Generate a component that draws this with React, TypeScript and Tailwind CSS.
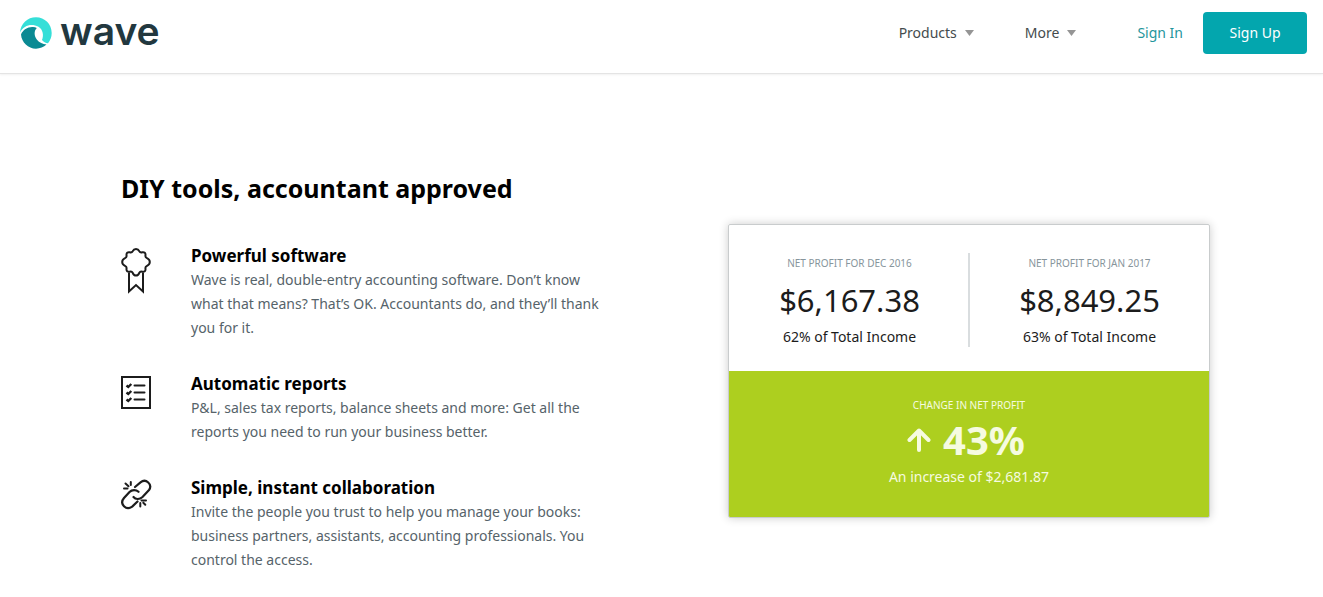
import type { ReactNode } from "react";

function WaveMark() {
  return (
    <svg viewBox="0 0 32 32" className="h-8 w-8" aria-hidden="true">
      <path
        d="M0 15.500C0.800 6.500 7.500 0.300 16 0.300C24.800 0.300 31.700 7.200 31.700 16C31.700 20 30.300 23.600 28 26.200C25.500 26 23.500 25 22 23C24 18.500 23 12.500 18.500 9.800C11.500 6 3.500 8.500 0 15.500Z"
        fill="#35dfd8"
      />
      <path
        d="M1 17.500C3 12.500 8 9.600 13 10C14.500 10.100 15.700 10.400 16.800 11C13.800 14 14 19 17 22.800C19.300 25.600 22.800 27.300 26.500 27.600C23.700 30.300 20 31.700 16 31.700C8.200 31.700 1.600 25.500 1 17.500Z"
        fill="#0a8a93"
      />
    </svg>
  );
}

function Caret() {
  return (
    <svg viewBox="0 0 9 6" className="h-[6px] w-[9px]" aria-hidden="true">
      <path d="M0 0H9L4.5 6Z" fill="#959595" />
    </svg>
  );
}

function RibbonIcon() {
  return (
    <svg
      viewBox="1 0 32 48"
      className="h-12 w-8"
      fill="none"
      stroke="#1c1c1c"
      strokeWidth="2"
      strokeLinejoin="round"
      aria-hidden="true"
    >
      <path d="M16 2Q18.300 2 19.300 4.200Q20.300 6 22.200 5.300Q25.800 4.800 25.500 8.300Q25 10.200 27 11.200Q29.800 12.500 29.800 15Q29.800 17.500 27 18.800Q25 19.800 25.500 21.700Q25.800 25.200 22.200 24.700Q20.300 24 19.300 25.800Q18.300 28.500 16 28.500Q13.700 28.500 12.700 25.800Q11.700 24 9.800 24.700Q6.200 25.200 6.500 21.700Q7 19.800 5 18.800Q2.200 17.500 2.200 15Q2.200 12.500 5 11.200Q7 10.200 6.500 8.300Q6.200 4.800 9.800 5.300Q11.700 6 12.700 4.200Q13.700 2 16 2Z" />
      <path d="M9 25.500V44.500L16 38L23 44.500V25.500" strokeLinejoin="miter" />
    </svg>
  );
}

function ChecklistIcon() {
  return (
    <svg
      viewBox="1 0 32 36"
      className="h-9 w-8"
      fill="none"
      stroke="#1c1c1c"
      strokeWidth="2"
      aria-hidden="true"
    >
      <path d="M2 2H30V33H2Z" />
      <path d="M14.500 10.500H24.500M14.500 17.500H24.500M14.500 24.500H24.500" strokeLinecap="round" />
      <path
        d="M6.500 10.500L8.300 12L11.300 9M6.500 17.500L8.300 19L11.300 16M6.500 24.500L8.300 26L11.300 23"
        strokeWidth="2.400"
      />
    </svg>
  );
}

function LinkIcon() {
  return (
    <svg
      viewBox="0 0 32 32"
      className="h-8 w-8"
      fill="none"
      stroke="#1c1c1c"
      strokeWidth="2.200"
      strokeLinecap="round"
      aria-hidden="true"
    >
      <path d="M14 8L19.500 3.300C25 -1 31.800 5.500 28 11L21.500 18C18.500 20.800 14.500 20.500 12.500 18" />
      <path d="M17.500 12.800C15 10.500 11 10.500 8.500 13L3 19C-2 25 5.200 32 11.200 27.600L16.500 22.500" />
      <path d="M3 9.500H6.500M4.500 4.500L7.500 7.300M9.800 3V6" strokeWidth="2" />
      <path d="M19.300 24V27.500M20.500 21.500H25M22.300 23.700L24.300 25.700" strokeWidth="2" />
    </svg>
  );
}

function ArrowUp() {
  return (
    <svg
      viewBox="0 0 24 24"
      className="h-6 w-6"
      fill="none"
      stroke="currentColor"
      strokeWidth="4"
      strokeLinecap="round"
      strokeLinejoin="round"
      aria-hidden="true"
    >
      <path d="M12 22V2.500M2.500 12L12 2.500L21.500 12" />
    </svg>
  );
}

const features: { icon: ReactNode; title: string; copy: string }[] = [
  {
    icon: <RibbonIcon />,
    title: "Powerful software",
    copy: "Wave is real, double-entry accounting software. Don’t know what that means? That’s OK. Accountants do, and they’ll thank you for it.",
  },
  {
    icon: <ChecklistIcon />,
    title: "Automatic reports",
    copy: "P&L, sales tax reports, balance sheets and more: Get all the reports you need to run your business better.",
  },
  {
    icon: <LinkIcon />,
    title: "Simple, instant collaboration",
    copy: "Invite the people you trust to help you manage your books: business partners, assistants, accounting professionals. You control the access.",
  },
];

const profits = [
  { label: "NET PROFIT FOR DEC 2016", amount: "$6,167.38", share: "62% of Total Income" },
  { label: "NET PROFIT FOR JAN 2017", amount: "$8,849.25", share: "63% of Total Income" },
];

export default function App() {
  return (
    <div className="min-h-screen bg-white font-['Noto_Sans','Open_Sans',sans-serif]">
      <header className="flex h-[74px] items-start justify-between border-b border-[#e4e4e4] pr-4 pl-5 pt-3 shadow-[0_1px_2px_rgba(0,0,0,0.06)]">
        <a href="#" className="flex h-[42px] items-center gap-2 text-[#22383f]">
          <WaveMark />
          <span className="pb-1 font-['Inter',sans-serif] text-[39px] leading-[38px] font-semibold">
            wave
          </span>
        </a>
        <nav className="flex h-[42px] items-center text-sm text-[#444b4d]">
          <button className="mr-[51px] flex items-center gap-2">
            Products <Caret />
          </button>
          <button className="mr-[61px] flex items-center gap-2">
            More <Caret />
          </button>
          <a href="#" className="mr-5 text-[#1f969c]">
            Sign In
          </a>
          <a
            href="#"
            className="flex h-[42px] w-[104px] items-center justify-center rounded bg-[#03a6ae] text-white"
          >
            Sign Up
          </a>
        </nav>
      </header>

      <main className="flex items-center justify-between gap-8 pt-24 pr-[113px] pb-6 pl-[121px]">
        <section className="max-w-[490px]">
          <h2 className="mb-[38px] text-[25px] leading-9 font-bold text-black">
            DIY tools, accountant approved
          </h2>
          <ul className="space-y-8">
            {features.map((feature) => (
              <li key={feature.title} className="flex gap-[38px]">
                <div className="w-8 shrink-0 pt-[3px]">{feature.icon}</div>
                <div>
                  <h3 className="text-[17px] leading-6 font-bold text-black">{feature.title}</h3>
                  <p className="text-sm leading-6 text-[#56636a]">{feature.copy}</p>
                </div>
              </li>
            ))}
          </ul>
        </section>

        <section className="w-[482px] shrink-0 overflow-hidden rounded-xs border border-[#c9cccd] text-center shadow-[0_0_10px_rgba(0,0,0,0.2)]">
          <div className="grid grid-cols-2 divide-x-2 divide-[#d9dddf] pt-7 pb-6 pl-[2px]">
            {profits.map((profit) => (
              <div key={profit.label} className="text-[#1c1c1c]">
                <div className="text-[10px] leading-5 text-[#87959c]">{profit.label}</div>
                <div className="pt-1 text-[31px] leading-[46px]">{profit.amount}</div>
                <div className="pt-1 text-sm leading-5">{profit.share}</div>
              </div>
            ))}
          </div>
          <div className="bg-[#adcf1f] pt-6 pb-7 text-[#f6fbe0]">
            <div className="text-[10px] leading-5">CHANGE IN NET PROFIT</div>
            <div className="flex items-center justify-center gap-3 pr-[6px] text-[40px] leading-[50px] font-bold">
              <ArrowUp />
              43%
            </div>
            <div className="text-sm leading-6">An increase of $2,681.87</div>
          </div>
        </section>
      </main>
    </div>
  );
}
